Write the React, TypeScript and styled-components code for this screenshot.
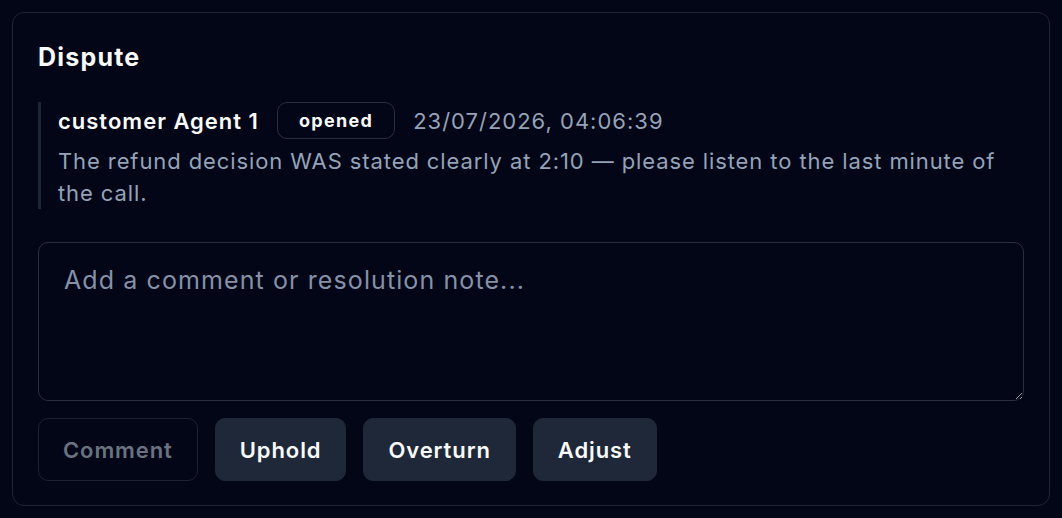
import styled, { createGlobalStyle } from 'styled-components';

const GlobalStyle = createGlobalStyle`
  html, body {
    margin: 0;
    padding: 0;
    background: #020617;
  }
  body {
    font-family: Inter, "Noto Sans", "Liberation Sans", sans-serif;
    letter-spacing: 1px;
    -webkit-font-smoothing: antialiased;
  }
  * {
    box-sizing: border-box;
  }
`;

const Page = styled.div`
  padding: 12px;
  width: 1062px;
  height: 518px;
`;

const Card = styled.section`
  width: 1038px;
  height: 494px;
  border: 1.5px solid #1f2533;
  border-radius: 12px;
  background: #020617;
  padding: 26px 24px 24px 25px;
  display: flex;
  flex-direction: column;
`;

const Title = styled.h2`
  margin: 0 0 27px;
  font-size: 25px;
  line-height: 36px;
  font-weight: 700;
  letter-spacing: 1.2px;
  color: #f8fafc;
`;

const Quote = styled.div`
  border-left: 3.5px solid #1e2533;
  padding-left: 17px;
  display: flex;
  flex-direction: column;
  gap: 6px;
  margin-bottom: 33px;
`;

const MetaRow = styled.div`
  display: flex;
  align-items: center;
  gap: 18px;
  height: 37px;
`;

const Author = styled.span`
  font-size: 22px;
  font-weight: 600;
  color: #f8fafc;
`;

const Badge = styled.span`
  display: inline-flex;
  align-items: center;
  height: 37px;
  padding: 0 21px;
  border: 1.5px solid #283040;
  border-radius: 10px;
  font-size: 18px;
  font-weight: 700;
  letter-spacing: 1.3px;
  color: #f8fafc;
`;

const Timestamp = styled.span`
  font-size: 22px;
  color: #94a3b8;
`;

const Body = styled.p`
  margin: 0;
  font-size: 22px;
  line-height: 32px;
  letter-spacing: 0.9px;
  color: #94a3b8;
  max-width: 960px;
`;

const NoteInput = styled.textarea`
  width: 986px;
  height: 159px;
  border: 1.5px solid #283040;
  border-radius: 10px;
  background: #020617;
  color: #f8fafc;
  padding: 19px 25px;
  font-family: inherit;
  font-size: 25px;
  line-height: 36px;
  letter-spacing: 1.1px;
  outline: none;
  margin: 0 0 17px;
  resize: vertical;
  color-scheme: dark;

  &::placeholder {
    color: #8591a7;
  }
`;

const Actions = styled.div`
  display: flex;
  gap: 17px;
`;

const Button = styled.button<{ $outline?: boolean }>`
  height: 63px;
  padding: 0 24px;
  border-radius: 10px;
  font-family: inherit;
  font-size: 22px;
  font-weight: 600;
  letter-spacing: 0.9px;
  cursor: pointer;
  border: 1.5px solid ${(p) => (p.$outline ? '#1c2230' : '#1f2838')};
  background: ${(p) => (p.$outline ? 'transparent' : '#1f2838')};
  color: ${(p) => (p.$outline ? '#6b7280' : '#f8fafc')};
`;

export default function App() {
  return (
    <>
      <GlobalStyle />
      <Page>
        <Card>
          <Title>Dispute</Title>
          <Quote>
            <MetaRow>
              <Author>customer Agent 1</Author>
              <Badge>opened</Badge>
              <Timestamp>23/07/2026, 04:06:39</Timestamp>
            </MetaRow>
            <Body>
              The refund decision WAS stated clearly at 2:10 — please listen to the last minute of the call.
            </Body>
          </Quote>
          <NoteInput placeholder="Add a comment or resolution note..." />
          <Actions>
            <Button $outline disabled>Comment</Button>
            <Button>Uphold</Button>
            <Button>Overturn</Button>
            <Button>Adjust</Button>
          </Actions>
        </Card>
      </Page>
    </>
  );
}
